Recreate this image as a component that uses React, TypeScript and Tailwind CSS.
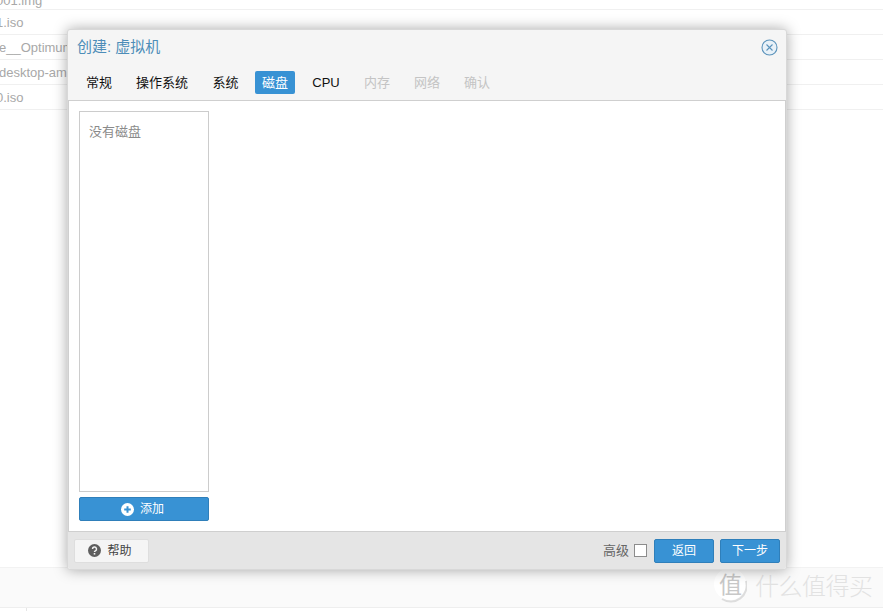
import React from "react";

function Row({ text, first, shift }: { text: string; first?: boolean; shift: string }) {
  return (
    <div className={`${first ? "h-[10px] items-end" : "h-[25px] items-center pt-[2px]"} flex overflow-hidden border-b border-[#f0f0f0] text-[13px] text-[#a8a8a8] whitespace-nowrap`}>
      <span className={`${shift} ${first ? "relative top-[1px]" : ""}`}>{text}</span>
    </div>
  );
}

function Tab({ label, state, w }: { label: string; state?: "active" | "disabled"; w: string }) {
  const cls =
    state === "active"
      ? "bg-[#3892d4] text-white rounded-[2px]"
      : state === "disabled"
      ? "text-[#c4c4c4]"
      : "text-[#111111]";
  return <div className={`h-[23px] flex items-center justify-center text-[13px] ${w} ${cls}`}>{label}</div>;
}

export default function App() {
  return (
    <div className="relative w-[883px] h-[611px] overflow-hidden bg-white font-['Liberation_Sans','Noto_Sans_CJK_SC',sans-serif]">
      <div className="flex flex-col">
        <Row text="001.img" first shift="-ml-[4px]" />
        <Row text="1.iso" shift="-ml-[4px]" />
        <Row text="e__Optimum" shift="-ml-[1px]" />
        <Row text="desktop-amd64" shift="-ml-[1px]" />
        <Row text="0.iso" shift="-ml-[4px]" />
      </div>

      <div className="absolute left-0 right-0 top-[567px] h-[41px] bg-[#fafafa] border-t border-[#f2f2f2] border-b border-b-[#eeeeee]" />
      <div className="absolute left-[26px] top-[608px] h-[3px] w-px bg-[#e6e6e6]" />

      {/* watermark */}
      <div className="absolute left-[713px] top-[567px] flex items-center gap-[8px] text-[#dcdcdc]">
        <svg width="34" height="36" viewBox="0 0 34 36" fill="none">
          <circle cx="17" cy="17" r="16" fill="#ffffff" />
          <path d="M9 32 A16 16 0 0 0 33 14" stroke="#dddddd" strokeWidth="2" />
        </svg>
        <span className="text-[24px] leading-[30px] tracking-[-0.5px] text-[#e2e2e2] font-['Noto_Sans_CJK_SC',sans-serif] font-light">什么值得买</span>
      </div>
      <span className="absolute left-[719px] top-[570px] text-[23px] leading-[26px] text-[#c8c8c8] font-['Noto_Sans_CJK_SC',sans-serif]">值</span>

      {/* dialog */}
      <div className="absolute left-[67px] top-[29px] w-[720px] h-[541px] flex flex-col bg-[#f5f5f5] rounded-[3px] border border-[#d8d8d8] shadow-[0_0_14px_rgba(0,0,0,0.34)]">
        <div className="flex items-center justify-between h-[35px] pl-[9px] pr-[8px] shrink-0">
          <span className="text-[15px] text-[#4d8db8] pb-[1px]">创建: 虚拟机</span>
          <svg width="17" height="17" viewBox="0 0 17 17" fill="none" stroke="#5b93bb" strokeWidth="1.1">
            <circle cx="8.5" cy="8.5" r="7.5" fill="#e8f1f8" />
            <path d="M5.5 5.5 L11.5 11.5 M11.5 5.5 L5.5 11.5" />
          </svg>
        </div>

        <div className="flex items-center h-[35px] pl-[12px] shrink-0 gap-[10px]">
          <Tab label="常规" w="w-[38px]" />
          <Tab label="操作系统" w="w-[68px]" />
          <Tab label="系统" w="w-[39px]" />
          <Tab label="磁盘" state="active" w="w-[40px]" />
          <Tab label="CPU" w="w-[42px]" />
          <Tab label="内存" state="disabled" w="w-[40px]" />
          <Tab label="网络" state="disabled" w="w-[40px]" />
          <Tab label="确认" state="disabled" w="w-[40px]" />
        </div>

        <div className="flex-1 min-h-0 border-t border-x border-[#cfcfcf] bg-white px-[10px] pt-[10px] pb-[10px] flex flex-col items-start">
          <div className="w-[130px] flex-1 border border-[#cccccc] px-[9px] pt-[10px] text-[13px] leading-[20px] text-[#8a8a8a]">没有磁盘</div>
          <button className="mt-[5px] w-[130px] h-[24px] rounded-[2px] bg-[#3892d4] border border-[#2f7fba] flex items-center justify-center gap-[6px] pr-[3px] text-[12px] text-white">
            <svg width="13" height="13" viewBox="0 0 13 13">
              <circle cx="6.5" cy="6.5" r="6.5" fill="#ffffff" />
              <path d="M6.5 3.2 V9.8 M3.2 6.5 H9.8" stroke="#3892d4" strokeWidth="2" />
            </svg>
            添加
          </button>
        </div>

        <div className="h-[38px] shrink-0 bg-[#e5e5e5] border-t border-[#cfcfcf] flex items-center pl-[6px] pr-[6px] rounded-b-[3px]">
          <button className="w-[75px] h-[24px] rounded-[2px] bg-[#f5f5f5] border border-[#dedede] flex items-center justify-center gap-[6px] pr-[3px] text-[12px] text-[#444444]">
            <svg width="13" height="13" viewBox="0 0 13 13">
              <circle cx="6.5" cy="6.5" r="6.5" fill="#5f5f5f" />
              <path d="M4.5 5 A2 2 0 1 1 7.4 6.8 Q6.5 7.3 6.5 8" fill="none" stroke="#f5f5f5" strokeWidth="1.5" />
              <rect x="5.7" y="9" width="1.6" height="1.6" fill="#f5f5f5" />
            </svg>
            帮助
          </button>
          <div className="flex-1" />
          <span className="text-[13px] text-[#666666]">高级</span>
          <span className="ml-[5px] w-[13px] h-[13px] bg-white border border-[#8c8c8c]" />
          <button className="ml-[7px] w-[60px] h-[24px] rounded-[2px] bg-[#3892d4] border border-[#2f7fba] text-[12px] text-white">返回</button>
          <button className="ml-[6px] w-[60px] h-[24px] rounded-[2px] bg-[#3892d4] border border-[#2f7fba] text-[12px] text-white">下一步</button>
        </div>
      </div>
    </div>
  );
}
